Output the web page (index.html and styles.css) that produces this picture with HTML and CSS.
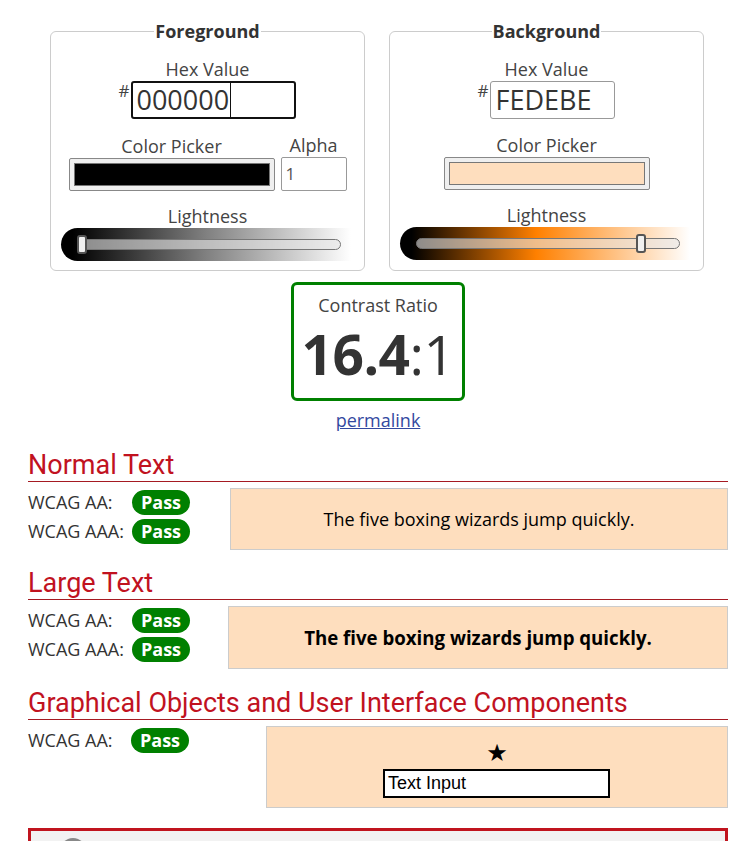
FILE: index.html
```html
<!DOCTYPE html>
<html lang="en">
<head>
<meta charset="utf-8">
<title>Contrast Checker</title>
<link rel="stylesheet" href="styles.css">
</head>
<body>
<main class="page">
  <div class="pickers">
    <fieldset class="panel">
      <legend class="panel-title">Foreground</legend>
      <div class="label">Hex Value</div>
      <div class="hex-row">
        <span class="hash">#</span>
        <div class="hex-input hex-focus"><span class="hex-text">000000</span><span class="caret"></span></div>
      </div>
      <div class="picker-row">
        <div class="picker-col">
          <div class="label">Color Picker</div>
          <div class="swatch"><div class="swatch-inner swatch-black"></div></div>
        </div>
        <div class="alpha-col">
          <div class="label">Alpha</div>
          <div class="alpha-input">1</div>
        </div>
      </div>
      <div class="label label-light">Lightness</div>
      <div class="slider slider-fg">
        <div class="track"></div>
        <div class="thumb thumb-fg"></div>
      </div>
    </fieldset>
    <fieldset class="panel">
      <legend class="panel-title">Background</legend>
      <div class="label">Hex Value</div>
      <div class="hex-row">
        <span class="hash">#</span>
        <div class="hex-input hex-plain"><span class="hex-text">FEDEBE</span></div>
      </div>
      <div class="picker-row">
        <div class="picker-col">
          <div class="label">Color Picker</div>
          <div class="swatch"><div class="swatch-inner swatch-peach"></div></div>
        </div>
      </div>
      <div class="label label-light">Lightness</div>
      <div class="slider slider-bg">
        <div class="track"></div>
        <div class="thumb thumb-bg"></div>
      </div>
    </fieldset>
  </div>

  <div class="ratio-wrap">
    <div class="ratio-box">
      <div class="ratio-label">Contrast Ratio</div>
      <div class="ratio-value"><b>16.4</b>:1</div>
    </div>
    <a class="permalink" href="#">permalink</a>
  </div>

  <section class="result result-first">
    <h2 class="result-title">Normal Text</h2>
    <div class="result-body">
      <div class="checks checks-normal">
        <div class="check"><span class="check-label">WCAG AA:</span><span class="pass">Pass</span></div>
        <div class="check"><span class="check-label">WCAG AAA:</span><span class="pass">Pass</span></div>
      </div>
      <div class="sample sample-normal">The five boxing wizards jump quickly.</div>
    </div>
  </section>

  <section class="result result-second">
    <h2 class="result-title">Large Text</h2>
    <div class="result-body">
      <div class="checks checks-large">
        <div class="check"><span class="check-label">WCAG AA:</span><span class="pass">Pass</span></div>
        <div class="check"><span class="check-label">WCAG AAA:</span><span class="pass">Pass</span></div>
      </div>
      <div class="sample sample-large">The five boxing wizards jump quickly.</div>
    </div>
  </section>

  <section class="result result-third">
    <h2 class="result-title">Graphical Objects and User Interface Components</h2>
    <div class="result-body">
      <div class="checks checks-graphic">
        <div class="check"><span class="check-label check-label-g">WCAG AA:</span><span class="pass">Pass</span></div>
      </div>
      <div class="sample sample-graphic">
        <div class="star">★</div>
        <div class="text-input">Text Input</div>
      </div>
    </div>
  </section>

  <div class="notice">
    <span class="notice-icon"></span>
  </div>
</main>
</body>
</html>
```

FILE: styles.css
```css
html, body {
  margin: 0;
  padding: 0;
  background: #ffffff;
}

body {
  font-family: "Open Sans", "Liberation Sans", sans-serif;
  color: #333333;
  font-size: 18px;
}

.page {
  width: 700px;
  margin-left: 28px;
  padding-top: 19px;
}

.pickers {
  display: flex;
  gap: 24px;
  padding-left: 22px;
}

.panel {
  width: 315px;
  box-sizing: border-box;
  margin: 0;
  padding: 14px 0 9px;
  border: 1px solid #cccccc;
  border-radius: 6px;
  display: flex;
  flex-direction: column;
  align-items: center;
}

.panel-title {
  font-weight: 700;
  font-size: 18px;
  line-height: 24px;
  padding: 0 1px;
  margin: 0 auto;
  color: #333333;
}

.label {
  font-size: 18px;
  line-height: 24px;
  color: #444444;
  text-align: center;
}

.label-light {
  margin-top: 13px;
}

.hex-row {
  display: flex;
  align-items: flex-start;
}

.hash {
  font-size: 17px;
  line-height: 20px;
  margin-right: 2px;
  color: #444444;
}

.hex-input {
  box-sizing: border-box;
  height: 38px;
  display: flex;
  align-items: center;
  font-size: 27px;
  color: #333333;
  background: #ffffff;
}

.hex-focus {
  width: 165px;
  border: 2px solid #111111;
  border-radius: 3px;
  padding-left: 3px;
}

.hex-plain {
  width: 125px;
  border: 1px solid #999999;
  border-radius: 3px;
  padding-left: 4px;
}

.hex-text {
  line-height: 34px;
}

.caret {
  display: inline-block;
  width: 1px;
  height: 34px;
  background: #111111;
  margin-left: 1px;
}

.picker-row {
  display: flex;
  gap: 6px;
  margin-top: 14px;
  align-items: flex-end;
}

.picker-col,
.alpha-col {
  display: flex;
  flex-direction: column;
  align-items: center;
}

.swatch {
  box-sizing: border-box;
  width: 206px;
  height: 33px;
  border: 1px solid #888888;
  border-radius: 2px;
  background: #efefef;
  padding: 4px;
}

.swatch-inner {
  width: 100%;
  height: 100%;
  box-sizing: border-box;
  border: 1px solid #777777;
}

.swatch-black {
  background: #000000;
}

.swatch-peach {
  background: #fedebe;
}

.alpha-input {
  box-sizing: border-box;
  width: 66px;
  height: 34px;
  border: 1px solid #999999;
  border-radius: 2px;
  font-size: 17px;
  line-height: 32px;
  padding-left: 4px;
  color: #555555;
}

.slider {
  position: relative;
  width: 290px;
  height: 33px;
  border-radius: 17px 0 0 17px;
  margin-left: -3px;
}

.slider-fg {
  background: linear-gradient(to right, #000000 0%, #000000 4%, #808080 50%, #ffffff 100%);
}

.slider-bg {
  background: linear-gradient(to right, #000000 0%, #000000 4%, #ff8000 47%, #ffffff 100%);
}

.track {
  position: absolute;
  left: 16px;
  top: 11px;
  width: 264px;
  height: 11px;
  box-sizing: border-box;
  border: 1px solid #777777;
  border-radius: 6px;
  background: rgba(230, 230, 230, 0.6);
}

.thumb {
  position: absolute;
  top: 7px;
  width: 10px;
  height: 19px;
  box-sizing: border-box;
  border: 2px solid #555555;
  border-radius: 3px;
  background: #f0f0f0;
}

.thumb-fg {
  left: 16px;
}

.thumb-bg {
  left: 236px;
}

.ratio-wrap {
  display: flex;
  flex-direction: column;
  align-items: center;
  margin-top: 11px;
}

.ratio-box {
  box-sizing: border-box;
  width: 174px;
  height: 119px;
  border: 3px solid #008000;
  border-radius: 6px;
  padding-top: 8px;
  text-align: center;
}

.ratio-label {
  font-size: 18px;
  line-height: 24px;
  color: #444444;
}

.ratio-value {
  font-size: 55px;
  line-height: 64px;
  margin-top: 5px;
  color: #333333;
  letter-spacing: -0.5px;
}

.ratio-value b {
  font-weight: 700;
}

.permalink {
  margin-top: 7px;
  font-size: 18px;
  line-height: 24px;
  color: #3349a0;
  text-decoration: underline;
}

.result-first {
  margin-top: 17px;
}

.result-second {
  margin-top: 17px;
}

.result-third {
  margin-top: 18px;
}

.result-title {
  margin: 0;
  font-family: Roboto, "Liberation Sans", sans-serif;
  font-weight: 400;
  font-size: 27px;
  line-height: 32px;
  color: #c1121f;
  border-bottom: 1px solid #a51a22;
}

.result-body {
  display: flex;
  align-items: flex-start;
  margin-top: 6px;
}

.checks {
  flex: none;
}

.checks-normal {
  width: 202px;
}

.checks-large {
  width: 200px;
}

.checks-graphic {
  width: 238px;
}

.check {
  display: flex;
  align-items: center;
  height: 28px;
  margin-bottom: 1px;
}

.check-label {
  width: 104px;
  font-size: 18px;
  line-height: 24px;
  color: #333333;
}

.check-label-g {
  width: 103px;
}

.pass {
  display: inline-flex;
  align-items: center;
  justify-content: center;
  width: 58px;
  height: 25px;
  border-radius: 13px;
  background: #008000;
  color: #ffffff;
  font-weight: 700;
  font-size: 18px;
  line-height: 24px;
}

.sample {
  flex: 1;
  box-sizing: border-box;
  background: #fedebe;
  border: 1px solid #cccccc;
  color: #000000;
  display: flex;
  align-items: center;
  justify-content: center;
}

.sample-normal {
  height: 62px;
  font-size: 18px;
}

.sample-large {
  height: 63px;
  font-size: 18.67px;
  font-weight: 700;
}

.sample-graphic {
  height: 82px;
  flex-direction: column;
  justify-content: flex-start;
  padding-top: 12px;
}

.star {
  font-family: "DejaVu Sans", sans-serif;
  font-size: 24px;
  line-height: 28px;
  color: #000000;
}

.text-input {
  box-sizing: border-box;
  width: 227px;
  height: 29px;
  margin-top: 2px;
  margin-right: 1px;
  border: 2px solid #000000;
  background: #ffffff;
  font-family: "Liberation Sans", Arial, sans-serif;
  font-size: 18px;
  line-height: 25px;
  padding-left: 3px;
  color: #000000;
}

.notice {
  margin-top: 20px;
  height: 40px;
  box-sizing: border-box;
  border: 3px solid #c0141e;
  border-bottom: none;
  background: #f2f2f2;
  padding: 7px 0 0 29px;
  overflow: hidden;
}

.notice-icon {
  display: block;
  width: 26px;
  height: 26px;
  border-radius: 50%;
  background: #888888;
}
```
